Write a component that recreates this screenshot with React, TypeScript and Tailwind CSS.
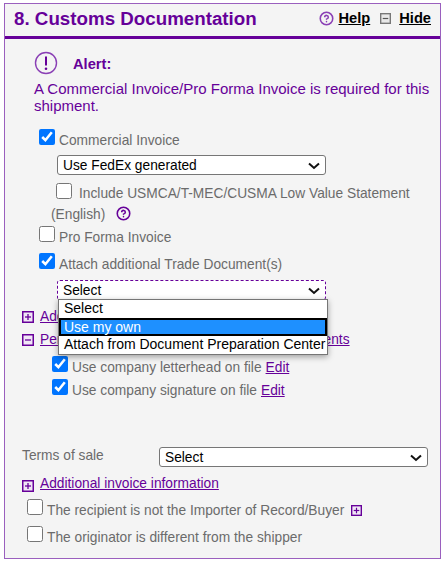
import { CircleHelp } from 'lucide-react';

function BoxIcon({ plus, gray, small }: { plus?: boolean; gray?: boolean; small?: boolean }) {
  const stroke = gray ? '#777777' : '#660099';
  return (
    <svg width={small ? 11 : 12} height={small ? 11 : 12} viewBox="0 0 12 12" className="shrink-0">
      <rect x="0.75" y="0.75" width="10.5" height="10.5" fill={gray ? '#e8e8e8' : '#f0e6f5'} stroke={stroke} strokeWidth="1.5" />
      <path d="M3 6h6" stroke={gray ? '#555555' : '#660099'} strokeWidth="1.3" />
      {plus && <path d="M6 3v6" stroke="#660099" strokeWidth="1.3" />}
    </svg>
  );
}

function Check({ label, checked, className = '', children }: { label: string; checked?: boolean; className?: string; children?: React.ReactNode }) {
  return (
    <label className={`flex h-[16px] items-center ${className}`}>
      <input type="checkbox" defaultChecked={checked} className="m-0 h-4 w-4 shrink-0" />
      <span className="relative top-[3px] ml-1 whitespace-nowrap text-[#6b6b6b]">{label}</span>
      {children}
    </label>
  );
}

function NativeSelect({ value, className = '', dashed }: { value: string; className?: string; dashed?: boolean }) {
  return (
    <div className={`relative h-[20px] w-[269px] ${className}`}>
      <select
        defaultValue={value}
        className={`block h-[20px] w-full appearance-none rounded-[3px] border bg-white pl-[5px] text-black ${dashed ? 'border-dashed border-[#660099]' : 'border-[#767676]'}`}
      >
        <option>{value}</option>
      </select>
      <svg width="12" height="8" viewBox="0 0 12 8" className="pointer-events-none absolute top-[7px] right-[6px]">
        <path d="M1 1.5l5 4.5 5-4.5" fill="none" stroke="#111111" strokeWidth="2" />
      </svg>
    </div>
  );
}

export default function App() {
  return (
    <div className="h-[562px] w-[441px] overflow-hidden bg-white pt-[3px] pl-[4px] font-['Liberation_Sans',Arial,sans-serif] text-[13.75px] leading-[17px]">
      <section className="h-[556px] w-[437px] border border-[#9a5fbe] bg-[#f4f4f4]">
        <header className="flex h-[35px] items-center justify-between border-b-[3px] border-[#660099] pr-[9px] pb-[3px] pl-[9px]">
          <h1 className="text-[18.75px] font-bold whitespace-nowrap text-[#660099]">8. Customs Documentation</h1>
          <div className="flex items-center text-[14.67px] font-bold text-black">
            <CircleHelp size={15} strokeWidth={2.5} className="text-[#8a3fb5]" />
            <a className="ml-[4px] underline">Help</a>
            <span className="ml-[10px]"><BoxIcon gray small /></span>
            <a className="ml-[8px] underline">Hide</a>
          </div>
        </header>

        <div className="pt-[12px] pl-[29px]">
          <div className="flex items-center">
            <svg width="24" height="24" viewBox="0 0 24 24" className="shrink-0">
              <circle cx="12" cy="12" r="10.5" fill="none" stroke="#8a3fb5" strokeWidth="1.4" />
              <path d="M12 5.5v9" stroke="#660099" strokeWidth="2" />
              <circle cx="12" cy="17.8" r="1.3" fill="#660099" />
            </svg>
            <strong className="relative top-[1px] ml-[15px] text-[14.67px] text-[#660099]">Alert:</strong>
          </div>
          <p className="mt-[5px] w-[400px] text-[15px] text-[#660099]">A Commercial Invoice/Pro Forma Invoice is required for this shipment.</p>
        </div>

        <div className="relative pl-[34px]">
          <Check label="Commercial Invoice" checked className="mt-[15px]" />
          <NativeSelect value="Use FedEx generated" className="mt-[10px] ml-[18px]" />
          <div className="mt-[8px] ml-[17px] flex h-[16px] items-center">
            <input type="checkbox" className="m-0 h-4 w-4 shrink-0" />
            <span className="relative top-[2px] ml-[7px] whitespace-nowrap text-[#6b6b6b]">Include USMCA/T-MEC/CUSMA Low Value Statement</span>
          </div>
          <div className="mt-[7px] ml-[12px] flex h-[17px] items-center text-[#6b6b6b]">
            (English)
            <CircleHelp size={15} strokeWidth={2.5} className="-mt-[3px] ml-[11px] text-[#660099]" />
          </div>
          <Check label="Pro Forma Invoice" className="mt-[3px]" />
          <Check label="Attach additional Trade Document(s)" checked className="mt-[11px]" />

          <div className="relative mt-[11px] ml-[18px] w-[269px]">
            <NativeSelect value="Select" dashed />
            <ul className="absolute top-[19px] left-[1px] z-10 h-[56px] w-[270px] border border-[#767676] bg-white text-[14px] whitespace-nowrap text-black shadow-[0_2px_6px_rgba(0,0,0,0.35)]">
              <li className="h-[18px] pl-[5px]">Select</li>
              <li className="h-[18px] border-2 border-black bg-[#1e90ff] pl-[3px] leading-[14px] text-white">Use my own</li>
              <li className="h-[18px] pl-[5px]">Attach from Document Preparation Center</li>
            </ul>
          </div>
        </div>

        <div className="mt-[8px] flex h-[17px] items-center pl-[17px]">
          <BoxIcon plus />
          <a className="ml-[6px] text-[#660099] underline">Add additional documents</a>
        </div>
        <div className="mt-[6px] flex h-[17px] items-center pl-[17px]">
          <BoxIcon />
          <a className="ml-[6px] whitespace-nowrap text-[#660099] underline">Personalize your logo and signature on documents</a>
        </div>

        <div className="pl-[47px]">
          <Check label="Use company letterhead on file" checked className="mt-[8px]">
            <a className="relative top-[3px] ml-1 text-[#660099] underline">Edit</a>
          </Check>
          <Check label="Use company signature on file" checked className="mt-[7px]">
            <a className="relative top-[3px] ml-1 text-[#660099] underline">Edit</a>
          </Check>
        </div>

        <div className="mt-[52px] flex h-[20px] items-start pl-[17px]">
          <span className="w-[137px] text-[#6b6b6b]">Terms of sale</span>
          <NativeSelect value="Select" />
        </div>

        <div className="mt-[10px] flex h-[17px] items-center pl-[17px]">
          <BoxIcon plus />
          <a className="-mt-[4px] ml-[6px] text-[#660099] underline">Additional invoice information</a>
        </div>

        <div className="pl-[22px]">
          <Check label="The recipient is not the Importer of Record/Buyer" className="mt-[5px]">
            <span className="relative top-[3px] ml-[7px]"><BoxIcon plus small /></span>
          </Check>
          <Check label="The originator is different from the shipper" className="mt-[11px]" />
        </div>
      </section>
    </div>
  );
}
